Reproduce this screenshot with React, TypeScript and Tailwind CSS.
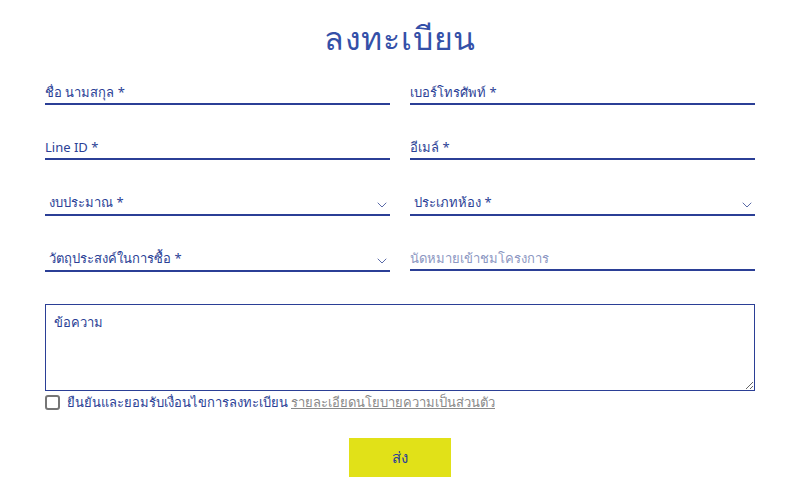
import { ChevronDown } from 'lucide-react'

const font = { fontFamily: '"Noto Sans", "Liberation Sans", sans-serif' }

function TextField({ label, muted }: { label: string; muted?: boolean }) {
  return (
    <input
      type="text"
      placeholder={label}
      className={`h-8 w-full border-b-2 border-[#2b3f96] bg-transparent pt-2 text-[13px] outline-none ${
        muted ? 'placeholder:text-[#8c97c2]' : 'placeholder:text-[#2b3f96]'
      }`}
    />
  )
}

function SelectField({ label }: { label: string }) {
  return (
    <div className="relative h-[33px] w-full border-b-2 border-[#2b3f96]">
      <select className="h-full w-full appearance-none bg-transparent pl-1 pt-2 text-[13px] text-[#2b3f96] outline-none">
        <option>{label}</option>
      </select>
      <ChevronDown className="pointer-events-none absolute right-0 top-[14px] h-4 w-4 text-[#5a6aa8]" strokeWidth={1.5} />
    </div>
  )
}

export default function App() {
  return (
    <div className="min-h-screen bg-white" style={font}>
      <div className="ml-[45px] w-[710px] pt-[14px]">
        <h1 className="text-center text-[32px] font-extralight tracking-wide text-[#3450a8]">ลงทะเบียน</h1>

        <div className="mt-[11px] grid grid-cols-2 gap-x-5 gap-y-[23px]">
          <TextField label="ชื่อ นามสกุล *" />
          <TextField label="เบอร์โทรศัพท์ *" />
          <TextField label="Line ID *" />
          <TextField label="อีเมล์ *" />
          <SelectField label="งบประมาณ *" />
          <SelectField label="ประเภทห้อง *" />
          <SelectField label="วัตถุประสงค์ในการซื้อ *" />
          <TextField label="นัดหมายเข้าชมโครงการ" muted />
        </div>

        <textarea
          placeholder="ข้อความ"
          className="mt-8 block h-[87px] w-full border border-[#2b3f96] px-2 py-2 text-[13px] outline-none placeholder:text-[#2b3f96]"
        />

        <label className="mt-[2px] flex items-center gap-[7px] text-[13px]">
          <input type="checkbox" className="h-[15px] w-[15px] appearance-none rounded-[3px] border-2 border-[#767676] bg-white" />
          <span className="text-[#2b3f96]">ยืนยันและยอมรับเงื่อนไขการลงทะเบียน</span>
          <a className="-ml-1 text-[#8a8a8a] underline">รายละเอียดนโยบายความเป็นส่วนตัว</a>
        </label>

        <div className="mt-[25px] flex justify-center">
          <button className="h-[39px] w-[102px] bg-[#e1e118] text-[15px] font-medium text-[#2b3f96]">ส่ง</button>
        </div>
      </div>
    </div>
  )
}
